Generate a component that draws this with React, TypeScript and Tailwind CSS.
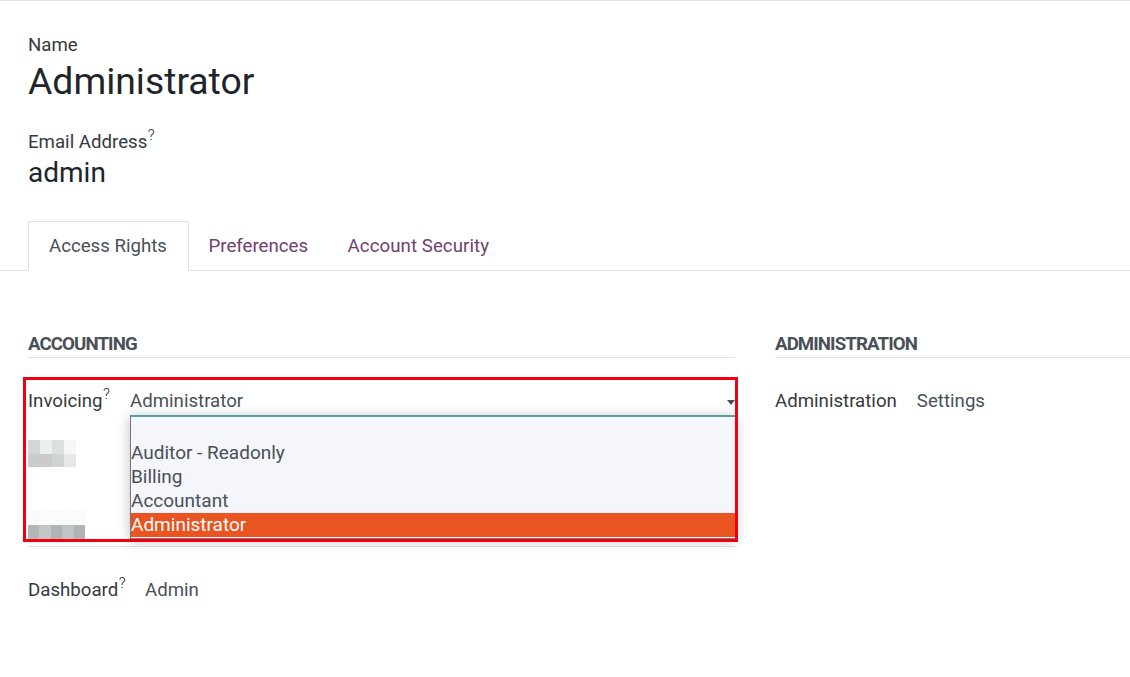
const topCells = ["bg-[#d3d6d7]", "bg-[#eceeee]", "bg-[#dcdfe0]", "bg-[#f5f6f6]"];
const bottomCells = ["bg-[#c9cccd]", "bg-[#cdcac8]", "bg-[#d0d3d5]", "bg-[#e6e8e9]"];
const faintCells = ["bg-[#fafafa]", "bg-[#fbfbfb]", "bg-[#fafafa]", "bg-[#fbfbfb]", "bg-[#fafafa]"];
const darkCells = ["bg-[#b3b7ba]", "bg-[#c3c6c5]", "bg-[#b0b4b7]", "bg-[#bfc4c5]", "bg-[#b0b4b6]"];

function Help() {
  return <sup className="relative -top-[8px] ml-[0.5px] align-baseline text-[15px] font-light leading-none text-[#212529]">?</sup>;
}

export default function App() {
  return (
    <div className="relative h-[677px] w-[1130px] overflow-hidden border-t border-[#dee2e6] bg-white font-['Roboto',sans-serif] text-[18.67px] leading-[27px] text-[#212529]">
      <div className="px-7 pt-[31px]">
        <div className="text-[#343a40]">Name</div>
        <h1 className="mt-[1px] text-[37.33px] leading-[43px]">Administrator</h1>
        <div className="mt-[26px] text-[#343a40]">
          Email Address
          <Help />
        </div>
        <div className="mt-[1px] text-[28px] leading-[32px]">admin</div>
      </div>

      <div className="mt-[32px] flex h-[50px] border-b border-[#dee2e6] pl-7">
        <div className="z-10 flex h-[50px] w-[161px] items-center border border-[#dee2e6] border-b-white bg-white pl-5 text-[#495057]">Access Rights</div>
        <div className="flex h-[49px] items-center px-[19.5px] pt-[2px] text-[#71406f]">Preferences</div>
        <div className="flex h-[49px] items-center px-5 pt-[2px] tracking-[0.06px] text-[#71406f]">Account Security</div>
      </div>

      <div className="mt-[56px] flex gap-10 pl-7">
        <div className="w-[707px]">
          <div className="flex h-[31px] items-center border-b border-[#dee2e6] pt-[4px] font-bold tracking-[-0.9px] text-[#495057] uppercase">Accounting</div>
          <div className="mt-[30px] flex h-[27px] items-center">
            <div className="w-[102px] text-[#343a40]">
              Invoicing
              <Help />
            </div>
            <div className="flex flex-1 items-center justify-between text-[#495057]">
              <span>Administrator</span>
              <span className="mt-[2px] h-0 w-0 border-x-[4px] border-t-[5px] border-x-transparent border-t-[#495057]" />
            </div>
          </div>
          <div className="mt-[25px] grid h-[27px] w-[48px] grid-cols-4">
            {topCells.map((c, i) => <div key={i} className={c} />)}
            {bottomCells.map((c, i) => <div key={i} className={c} />)}
          </div>
          <div className="mt-[43px] grid h-[29px] w-[57px] grid-cols-5">
            {faintCells.map((c, i) => <div key={i} className={c} />)}
            {darkCells.map((c, i) => <div key={i} className={c} />)}
          </div>
          <div className="mt-[7px] border-t border-[#dee2e6]" />
          <div className="mt-[30px] flex h-[27px] items-center">
            <div className="w-[117px] text-[#343a40]">
              Dashboard
              <Help />
            </div>
            <div className="text-[#495057]">Admin</div>
          </div>
        </div>
        <div className="flex-1">
          <div className="flex h-[31px] items-center border-b border-[#dee2e6] pt-[4px] font-bold tracking-[-0.9px] text-[#495057] uppercase">Administration</div>
          <div className="mt-[30px] flex h-[27px] items-center gap-5">
            <div className="text-[#343a40]">Administration</div>
            <div className="text-[#495057]">Settings</div>
          </div>
        </div>
      </div>

      <div className="absolute top-[414px] left-[130px] h-[124px] w-[605px] border-t-2 border-b border-l border-t-[#5b9ea2] border-b-[#767676] border-l-[#767676] bg-[#f4f6fb] text-[19px] leading-[24px] text-[#495057] shadow-[0_2px_12px_rgba(0,0,0,0.25)]">
        <div className="h-6" />
        <div className="h-6">Auditor - Readonly</div>
        <div className="h-6">Billing</div>
        <div className="h-6">Accountant</div>
        <div className="h-6 bg-[#e95420] text-white">Administrator</div>
      </div>

      <div className="pointer-events-none absolute top-[376px] left-[23px] h-[165px] w-[715px] border-[3px] border-[#f00010]" />
    </div>
  );
}
